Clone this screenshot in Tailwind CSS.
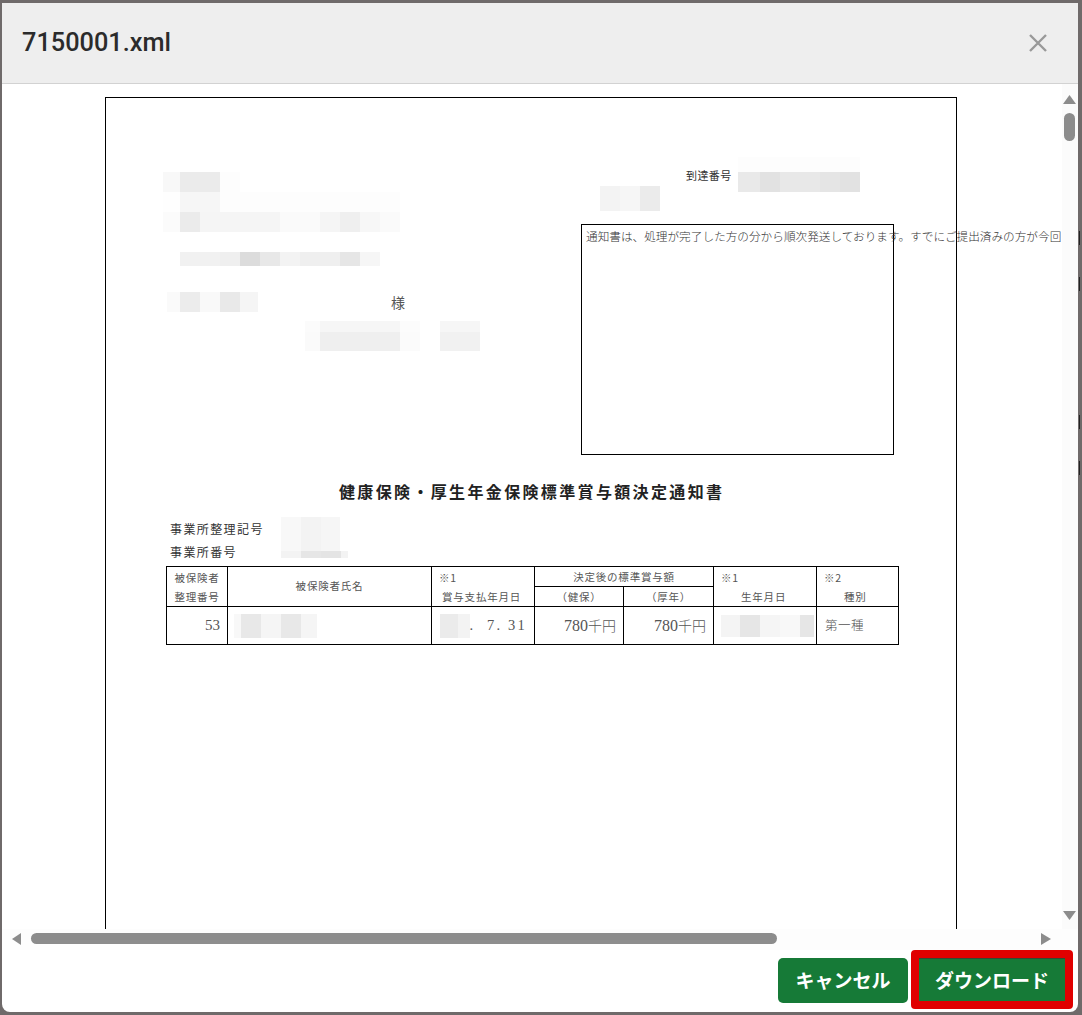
<!DOCTYPE html>
<html lang="ja">

<head>
    <meta charset="UTF-8">
    <title>7150001.xml</title>
    <script src="https://cdn.jsdelivr.net/npm/@tailwindcss/browser@4"></script>
</head>

<body class="relative w-[1082px] h-[1015px] overflow-hidden bg-[#6f6a6a] pt-[3px] pl-[2px] pr-[4px] pb-[3px] font-['Roboto','Noto_Sans_CJK_JP',sans-serif]">
    <!-- page behind the dialog, only slivers of it show -->
    <div class="absolute right-[2px] top-[231px] w-[1px] h-[14px] bg-[#222222]"></div>
    <div class="absolute right-[2px] top-[277px] w-[1px] h-[14px] bg-[#222222]"></div>
    <div class="absolute right-[2px] top-[415px] w-[1px] h-[14px] bg-[#222222]"></div>
    <div class="absolute right-[2px] top-[461px] w-[1px] h-[14px] bg-[#222222]"></div>

    <div class="relative w-full h-full flex flex-col bg-white rounded-b-lg overflow-hidden">
        <!-- header -->
        <div class="h-[81px] shrink-0 flex items-center justify-between pl-[20px] pr-[30px] bg-[#eeeeee] border-b border-[#d2d2d2]">
            <h1 class="text-[25.3px] font-medium text-[#2b2b2b]">7150001.xml</h1>
            <svg class="w-[20px] h-[20px]" viewBox="0 0 20 20" fill="none" stroke="#999999" stroke-width="2.4">
                <path d="M2 2 L18 18 M18 2 L2 18" />
            </svg>
        </div>

        <!-- preview -->
        <div class="flex h-[845px] shrink-0">
            <div class="relative flex-1 overflow-hidden font-['Noto_Sans_CJK_JP',sans-serif]">
                <!-- document sheet -->
                <div class="absolute left-[103px] top-[13px] w-[852px] h-[1200px] border border-black">
                    <!-- mosaics -->
                    <div class="absolute left-[57px] top-[74px] flex h-[20px]">
                        <div class="w-[17px] bg-[#f8f8f8]"></div>
                        <div class="w-[40px] bg-[#ebebeb]"></div>
                        <div class="w-[20px] bg-[#fdfdfd]"></div>
                    </div>
                    <div class="absolute left-[57px] top-[94px] flex h-[20px]">
                        <div class="w-[17px] bg-[#fefefe]"></div>
                        <div class="w-[40px] bg-[#f6f6f6]"></div>
                        <div class="w-[180px] bg-[#fdfdfd]"></div>
                    </div>
                    <div class="absolute left-[57px] top-[114px] flex h-[20px]">
                        <div class="w-[17px] bg-[#fbfbfb]"></div>
                        <div class="w-[20px] bg-[#ebebeb]"></div>
                        <div class="w-[80px] bg-[#f5f5f5]"></div>
                        <div class="w-[40px] bg-[#fafafa]"></div>
                        <div class="w-[20px] bg-[#f5f5f5]"></div>
                        <div class="w-[20px] bg-[#efefef]"></div>
                        <div class="w-[20px] bg-[#f7f7f7]"></div>
                        <div class="w-[20px] bg-[#fafafa]"></div>
                    </div>
                    <div class="absolute left-[74px] top-[154px] flex h-[14px]">
                        <div class="w-[40px] bg-[#f1f1f1]"></div>
                        <div class="w-[20px] bg-[#efefef]"></div>
                        <div class="w-[20px] bg-[#dcdcdc]"></div>
                        <div class="w-[20px] bg-[#e8e8e8]"></div>
                        <div class="w-[20px] bg-[#f3f3f3]"></div>
                        <div class="w-[40px] bg-[#efefef]"></div>
                        <div class="w-[20px] bg-[#e6e6e6]"></div>
                        <div class="w-[20px] bg-[#f6f6f6]"></div>
                    </div>
                    <div class="absolute left-[61px] top-[194px] flex h-[20px]">
                        <div class="w-[13px] bg-[#fafafa]"></div>
                        <div class="w-[20px] bg-[#ececec]"></div>
                        <div class="w-[20px] bg-[#f9f9f9]"></div>
                        <div class="w-[20px] bg-[#e9e9e9]"></div>
                        <div class="w-[18px] bg-[#f5f5f5]"></div>
                    </div>
                    <div class="absolute left-[199px] top-[223px] flex h-[11px]">
                        <div class="w-[15px] bg-[#fbfbfb]"></div>
                        <div class="w-[80px] bg-[#f6f6f6]"></div>
                        <div class="w-[20px] bg-[#fcfcfc]"></div>
                        <div class="w-[20px]"></div>
                        <div class="w-[40px] bg-[#f6f6f6]"></div>
                    </div>
                    <div class="absolute left-[199px] top-[234px] flex h-[19px]">
                        <div class="w-[15px] bg-[#fafafa]"></div>
                        <div class="w-[80px] bg-[#efefef]"></div>
                        <div class="w-[20px] bg-[#fbfbfb]"></div>
                        <div class="w-[20px]"></div>
                        <div class="w-[40px] bg-[#f1f1f1]"></div>
                    </div>
                    <span class="absolute left-[285px] top-[194px] text-[14px] leading-[20px] text-[#555555]">様</span>

                    <!-- arrival number -->
                    <span class="absolute left-[580px] top-[69px] text-[11px] leading-[16px] tracking-[0.4px] text-[#333333]">到達番号</span>
                    <div class="absolute left-[632px] top-[59px] w-[122px] h-[15px] bg-[#fdfdfd]"></div>
                    <div class="absolute left-[632px] top-[74px] flex h-[20px]">
                        <div class="w-[22px] bg-[#e9e9e9]"></div>
                        <div class="w-[20px] bg-[#e2e2e2]"></div>
                        <div class="w-[40px] bg-[#e8e8e8]"></div>
                        <div class="w-[20px] bg-[#e5e5e5]"></div>
                        <div class="w-[20px] bg-[#e2e2e2]"></div>
                    </div>
                    <div class="absolute left-[494px] top-[88px] flex h-[25px]">
                        <div class="w-[20px] bg-[#f3f3f3]"></div>
                        <div class="w-[20px] bg-[#f6f6f6]"></div>
                        <div class="w-[20px] bg-[#ebebeb]"></div>
                    </div>

                    <!-- notice box -->
                    <div class="absolute left-[475px] top-[126px] w-[313px] h-[231px] border border-black">
                        <p class="pl-[4px] pt-[1px] text-[11.65px] leading-[20px] font-light whitespace-nowrap text-[#333333]">通知書は、処理が完了した方の分から順次発送しております。すでにご提出済みの方が今回</p>
                    </div>

                    <!-- title -->
                    <h2 class="absolute left-[233px] top-[381px] text-[16px] leading-[24px] font-bold tracking-[2.35px] whitespace-nowrap text-[#222222]">健康保険・厚生年金保険標準賞与額決定通知書</h2>

                    <!-- office -->
                    <span class="absolute left-[64px] top-[422px] text-[12px] leading-[18px] tracking-[1.4px] text-[#333333]">事業所整理記号</span>
                    <span class="absolute left-[64px] top-[445px] text-[12px] leading-[18px] tracking-[1.4px] text-[#333333]">事業所番号</span>
                    <div class="absolute left-[175px] top-[419px] flex h-[34px]">
                        <div class="w-[20px] bg-[#f8f8f8]"></div>
                        <div class="w-[20px] bg-[#f3f3f3]"></div>
                        <div class="w-[19px] bg-[#f6f6f6]"></div>
                    </div>
                    <div class="absolute left-[175px] top-[453px] flex h-[7px]">
                        <div class="w-[20px] bg-[#f3f3f3]"></div>
                        <div class="w-[20px] bg-[#e6e6e6]"></div>
                        <div class="w-[20px] bg-[#e4e4e4]"></div>
                        <div class="w-[7px] bg-[#f3f3f3]"></div>
                    </div>

                    <!-- table -->
                    <table class="absolute left-[60px] top-[468px] w-[732px] table-fixed border-collapse border border-black text-[10.5px] text-[#555555]">
                        <colgroup>
                            <col class="w-[61px]">
                            <col class="w-[204px]">
                            <col class="w-[103px]">
                            <col class="w-[89px]">
                            <col class="w-[90px]">
                            <col class="w-[103px]">
                            <col class="w-[82px]">
                        </colgroup>
                        <tr class="h-[20px]">
                            <td rowspan="2" class="border border-black text-center leading-[19px] tracking-[0.8px]">被保険者<br>整理番号</td>
                            <td rowspan="2" class="border border-black text-center tracking-[0.8px] pb-[2px]">被保険者氏名</td>
                            <td rowspan="2" class="border border-black leading-[19px] pl-[7px] tracking-[0.8px]">※1<br><span class="pl-[3px]">賞与支払年月日</span></td>
                            <td colspan="2" class="border border-black text-center leading-[19px] tracking-[0.8px]">決定後の標準賞与額</td>
                            <td rowspan="2" class="border border-black leading-[19px] pl-[7px] tracking-[0.8px]">※1<br><span class="pl-[20px]">生年月日</span></td>
                            <td rowspan="2" class="border border-black leading-[19px] pl-[7px] tracking-[0.8px]">※2<br><span class="pl-[20px]">種別</span></td>
                        </tr>
                        <tr class="h-[20px]">
                            <td class="border border-black text-center leading-[19px] tracking-[0.8px]">（健保）</td>
                            <td class="border border-black text-center leading-[19px] tracking-[0.8px]">（厚年）</td>
                        </tr>
                        <tr class="h-[38px]">
                            <td class="border border-black text-right pr-[7px] text-[15px] font-['Liberation_Serif',serif]">53</td>
                            <td class="border border-black pl-[6px]">
                                <div class="flex h-[24px]">
                                    <div class="w-[7px] bg-[#f8f8f8]"></div>
                                    <div class="w-[20px] bg-[#e8e8e8]"></div>
                                    <div class="w-[20px] bg-[#f5f5f5]"></div>
                                    <div class="w-[20px] bg-[#e8e8e8]"></div>
                                    <div class="w-[16px] bg-[#f5f5f5]"></div>
                                </div>
                            </td>
                            <td class="border border-black pl-[8px] pr-[7px]">
                                <div class="flex items-center h-[24px]">
                                    <div class="w-[20px] h-full bg-[#ebebeb]"></div>
                                    <div class="w-[13px] h-full bg-[#f3f3f3]"></div>
                                    <span class="ml-auto text-[14.5px] tracking-[2.2px] whitespace-pre font-['Liberation_Serif',serif]">.  7. 31</span>
                                </div>
                            </td>
                            <td class="border border-black text-right pr-[7px] text-[14px] font-light whitespace-nowrap"><span class="font-['Liberation_Serif',serif] font-normal text-[16px]">780</span>千円</td>
                            <td class="border border-black text-right pr-[7px] text-[14px] font-light whitespace-nowrap"><span class="font-['Liberation_Serif',serif] font-normal text-[16px]">780</span>千円</td>
                            <td class="border border-black pl-[7px]">
                                <div class="flex h-[22px]">
                                    <div class="w-[19px] bg-[#f4f4f4]"></div>
                                    <div class="w-[20px] bg-[#e6e6e6]"></div>
                                    <div class="w-[20px] bg-[#f5f5f5]"></div>
                                    <div class="w-[20px] bg-[#f8f8f8]"></div>
                                    <div class="w-[14px] bg-[#e6e6e6]"></div>
                                </div>
                            </td>
                            <td class="border border-black pl-[8px] text-[12.5px] font-light tracking-[0.5px]">第一種</td>
                        </tr>
                    </table>
                </div>
            </div>

            <!-- vertical scrollbar -->
            <div class="w-[16px] shrink-0 flex flex-col items-center bg-[#fbfbfb] pt-[11px] pb-[9px] pr-[1px]">
                <svg class="w-[13px] h-[9px] shrink-0" viewBox="0 0 13 9" fill="#8c8c8c"><path d="M6.5 0 L13 9 L0 9 Z" /></svg>
                <div class="w-[11px] h-[28px] mt-[9px] rounded-full bg-[#8c8c8c]"></div>
                <svg class="w-[13px] h-[9px] shrink-0 mt-auto" viewBox="0 0 13 9" fill="#8c8c8c"><path d="M0 0 L13 0 L6.5 9 Z" /></svg>
            </div>
        </div>

        <!-- horizontal scrollbar -->
        <div class="h-[21px] shrink-0 flex items-start pt-[4px] pl-[10px] bg-[#fdfdfd]">
            <svg class="w-[9px] h-[12px] shrink-0" viewBox="0 0 9 12" fill="#8c8c8c"><path d="M9 0 L9 12 L0 6 Z" /></svg>
            <div class="w-[746px] h-[11px] ml-[10px] rounded-full bg-[#8c8c8c]"></div>
            <svg class="w-[10px] h-[12px] shrink-0 ml-[264px]" viewBox="0 0 10 12" fill="#8c8c8c"><path d="M0 0 L0 12 L10 6 Z" /></svg>
        </div>

        <!-- footer -->
        <div class="flex-1 flex justify-end items-start gap-[3px] pr-[5px] font-['Noto_Sans_CJK_JP',sans-serif]">
            <button class="w-[130px] h-[45px] mt-[8px] rounded-[5px] bg-[#167a37] text-white text-[19px] font-bold">キャンセル</button>
            <div class="border-[8px] border-[#e00000] rounded-[4px]">
                <button class="block w-[146px] h-[43px] bg-[#167a37] border-t border-[#2f4a35] text-white text-[19px] font-bold">ダウンロード</button>
            </div>
        </div>
    </div>
</body>

</html>
